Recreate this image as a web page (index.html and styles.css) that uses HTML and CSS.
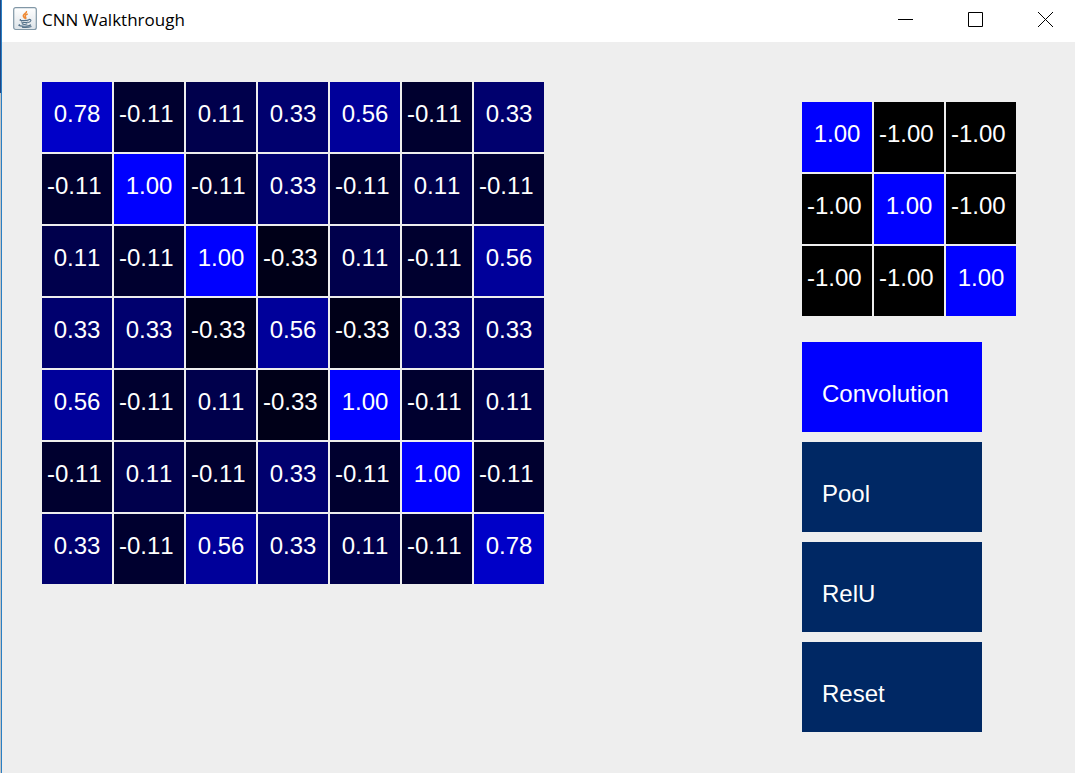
FILE: index.html
```html
<!DOCTYPE html>
<html lang="en">
<head>
<meta charset="utf-8">
<title>CNN Walkthrough</title>
<link rel="stylesheet" href="styles.css">
</head>
<body>
<header class="titlebar">
  <svg class="app-icon" viewBox="0 0 24 24" aria-hidden="true">
    <defs><linearGradient id="tile" x1="0" y1="0" x2="0" y2="1"><stop offset="0" stop-color="#fff"/><stop offset="1" stop-color="#dde3e8"/></linearGradient></defs>
    <rect x="0.7" y="0.7" width="22.6" height="21.8" rx="2" fill="url(#tile)" stroke="#8197a6" stroke-width="1.2"/>
    <path d="M13.500 4c1 2.200-4.500 3.200-3 5.500l1.300 2M14.700 7c-2.700 1-3 2-2 3.200.6.800.2 1.300-.4 1.800" fill="none" stroke="#ee8730" stroke-width="1.400"/>
    <path d="M8 12.500c-4 1.300 6 1.500 8 .2M15.500 12.500c4-.7 2.500 2.700-.5 3M8 14.600c1 1.200 5 1.200 7 .4M8.800 16.500c1.200 1 4 .9 5.500.2M7 17.500c-5 1.700 8 2.600 11 .2M9 20.200c3 .5 7 .2 9.500-.8" fill="none" stroke="#527089" stroke-width="1.100"/>
  </svg>
  <h1 class="title">CNN Walkthrough</h1>
  <div class="controls">
    <button class="control" type="button" aria-label="Minimize"><svg viewBox="0 0 15 15" class="glyph"><path d="M0 7.500h15"/></svg></button>
    <button class="control" type="button" aria-label="Maximize"><svg viewBox="0 0 15 15" class="glyph"><path d="M.5.5h14v14H.5z"/></svg></button>
    <button class="control" type="button" aria-label="Close"><svg viewBox="0 0 15 15" class="glyph"><path d="M0 0l15 15M15 0L0 15"/></svg></button>
  </div>
</header>
<main class="content">
  <table class="matrix" aria-label="Feature map">
    <tr><td class="p78"> 0.78</td><td class="n11">-0.11</td><td class="p11"> 0.11</td><td class="p33"> 0.33</td><td class="p56"> 0.56</td><td class="n11">-0.11</td><td class="p33"> 0.33</td></tr>
    <tr><td class="n11">-0.11</td><td class="p100"> 1.00</td><td class="n11">-0.11</td><td class="p33"> 0.33</td><td class="n11">-0.11</td><td class="p11"> 0.11</td><td class="n11">-0.11</td></tr>
    <tr><td class="p11"> 0.11</td><td class="n11">-0.11</td><td class="p100"> 1.00</td><td class="n33">-0.33</td><td class="p11"> 0.11</td><td class="n11">-0.11</td><td class="p56"> 0.56</td></tr>
    <tr><td class="p33"> 0.33</td><td class="p33"> 0.33</td><td class="n33">-0.33</td><td class="p56"> 0.56</td><td class="n33">-0.33</td><td class="p33"> 0.33</td><td class="p33"> 0.33</td></tr>
    <tr><td class="p56"> 0.56</td><td class="n11">-0.11</td><td class="p11"> 0.11</td><td class="n33">-0.33</td><td class="p100"> 1.00</td><td class="n11">-0.11</td><td class="p11"> 0.11</td></tr>
    <tr><td class="n11">-0.11</td><td class="p11"> 0.11</td><td class="n11">-0.11</td><td class="p33"> 0.33</td><td class="n11">-0.11</td><td class="p100"> 1.00</td><td class="n11">-0.11</td></tr>
    <tr><td class="p33"> 0.33</td><td class="n11">-0.11</td><td class="p56"> 0.56</td><td class="p33"> 0.33</td><td class="p11"> 0.11</td><td class="n11">-0.11</td><td class="p78"> 0.78</td></tr>
  </table>
  <aside class="side">
    <table class="matrix" aria-label="Filter">
      <tr><td class="p100"> 1.00</td><td class="n100">-1.00</td><td class="n100">-1.00</td></tr>
      <tr><td class="n100">-1.00</td><td class="p100"> 1.00</td><td class="n100">-1.00</td></tr>
      <tr><td class="n100">-1.00</td><td class="n100">-1.00</td><td class="p100"> 1.00</td></tr>
    </table>
    <div class="actions">
      <button class="action active" type="button">Convolution</button>
      <button class="action" type="button">Pool</button>
      <button class="action" type="button">RelU</button>
      <button class="action" type="button">Reset</button>
    </div>
  </aside>
</main>
</body>
</html>
```
FILE: styles.css
```css
* { box-sizing: border-box; }

/* The left padding shows the window edge: desktop behind, then the blue frame line. */
body {
  margin: 0;
  padding-left: 2px;
  min-height: 100vh;
  display: flex;
  flex-direction: column;
  background:
    linear-gradient(#1f4682 93px, #c4c4c4 93px) 0 0 / 1px 100% no-repeat,
    linear-gradient(#2a7fc4, #2a7fc4) 1px 0 / 1px 100% no-repeat,
    #eee;
  font-family: "Liberation Sans", Arial, sans-serif;
}

.titlebar {
  display: flex;
  align-items: center;
  height: 42px;
  padding: 0 5px 4px 11px;
  background: #fff;
}

.app-icon { width: 24px; height: 24px; }

.title {
  flex: 1;
  margin: 2px 0 0 5px;
  font: 400 17px/24px "Open Sans", "Noto Sans", sans-serif;
  color: #000;
}

.controls { display: flex; }

.control {
  display: flex;
  justify-content: center;
  align-items: center;
  width: 70px;
  height: 38px;
  padding: 0;
  border: 0;
  background: none;
}

.control:last-child { width: 60px; justify-content: flex-start; padding-left: 28px; }

.glyph {
  width: 15px;
  height: 15px;
  fill: none;
  stroke: #000;
  stroke-width: 1;
}

.content {
  display: flex;
  justify-content: space-between;
  align-items: flex-start;
  padding: 38px 57px 38px 38px;
}

.matrix {
  border-spacing: 2px;
  background: #eee;
  color: #fff;
  font-size: 24px;
  font-kerning: none;
}

.matrix td {
  width: 70px;
  min-width: 70px;
  height: 70px;
  padding: 0 0 6px 5px;
  line-height: 64px;
  white-space: pre;
}

.side { margin-top: 20px; }

.actions {
  display: flex;
  flex-direction: column;
  gap: 10px;
  width: 180px;
  margin: 24px 0 0 2px;
}

.action {
  padding: 20px 20px 6px;
  border: 0;
  background: #002864;
  color: #fff;
  font: 24px/64px "Liberation Sans", Arial, sans-serif;
  text-align: left;
}

.active { background: #00f; }

.p100 { background: #0000ff; }
.p78 { background: #0000c8; }
.p56 { background: #00009a; }
.p33 { background: #00006e; }
.p11 { background: #00004c; }
.n11 { background: #00002f; }
.n33 { background: #000018; }
.n100 { background: #000; }
```
